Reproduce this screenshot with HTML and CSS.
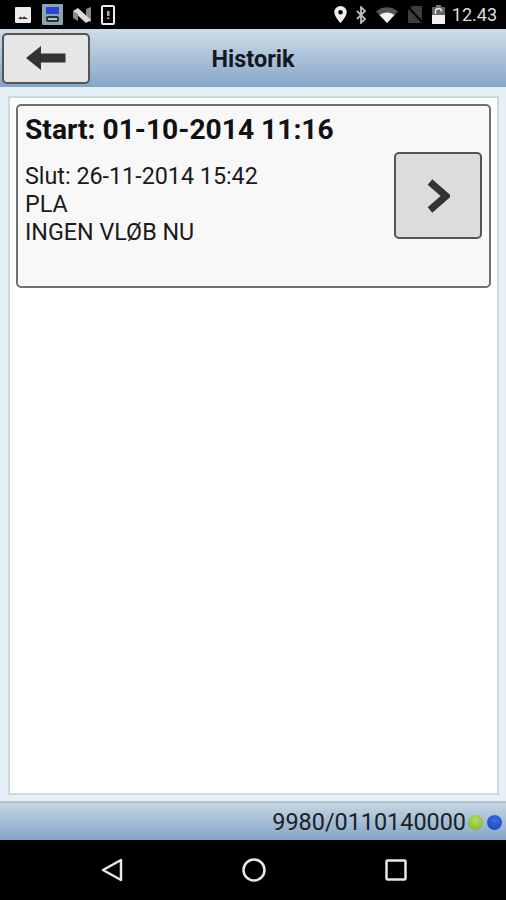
FILE: index.html
```html
<!DOCTYPE html>
<html lang="en">
<head>
    <meta charset="UTF-8">
    <meta name="viewport" content="width=device-width, initial-scale=1.0">
    <title>Historik</title>
    <link rel="stylesheet" href="styles.css">
</head>
<body>
    <div class="statusbar">
        <div class="status-left">
            <svg class="ico" width="16" height="16" viewBox="0 0 16 16"><rect width="16" height="16" rx="1" fill="#ececec"/><path d="M3 12l2.5-2.500 2 1.500 1.500-1.500 2 1 2 1.500z" fill="#333"/></svg>
            <svg class="ico" width="21" height="21" viewBox="0 0 21 21"><rect width="21" height="21" rx="1" fill="#8da3ad"/><rect x="4" y="3" width="13" height="7" fill="#2a46d8"/><rect x="4" y="12" width="13" height="6" rx="2" fill="#26343c"/><rect x="6" y="14" width="9" height="2" fill="#b8c6cc"/></svg>
            <svg class="ico" width="18" height="16" viewBox="0 0 18 16"><path d="M13 2l5-2v15l-5-2z" fill="#8a8a8a"/><path d="M0 4l5-3 13 12-5 3z" fill="#dcdcdc"/><path d="M0 4l5 3v7l-5-3z" fill="#8a8a8a"/></svg>
            <svg class="ico" width="14" height="20" viewBox="0 0 14 20"><rect x="1" y="1" width="12" height="18" rx="1" fill="#000" stroke="#eee" stroke-width="2"/><rect x="6" y="6" width="2.500" height="5" fill="#aaa"/><rect x="6" y="12.500" width="2.500" height="1.500" fill="#aaa"/></svg>
        </div>
        <div class="status-right">
            <svg width="13" height="17" viewBox="0 0 13 17"><path fill-rule="evenodd" d="M6.500 0A6.200 6.200 0 0 0 .3 6.200C.3 10.500 6.500 17 6.500 17s6.200-6.500 6.200-10.800A6.200 6.200 0 0 0 6.500 0zm0 8.500a2.300 2.300 0 1 1 0-4.600 2.300 2.300 0 0 1 0 4.600z" fill="#eee"/></svg>
            <svg width="11" height="18" viewBox="0 0 11 18"><path d="M1 5l8 8-4 4V1l4 4-8 8" fill="none" stroke="#bbb" stroke-width="1.800"/></svg>
            <svg width="22" height="16" viewBox="0 0 22 16"><path d="M0 4.500C6 -1.300 16 -1.300 22 4.500L11 16z" fill="#555"/><path d="M3.500 8C7.500 4.500 14.500 4.500 18.500 8L11 16z" fill="#f2f2f2"/></svg>
            <svg width="16" height="17" viewBox="0 0 16 17"><path d="M1 17V4l4-4h10v17z" fill="#3d3d3d"/><path d="M1 1l14 15" stroke="#000" stroke-width="2"/></svg>
            <svg width="13" height="19" viewBox="0 0 13 19"><rect x="4" y="0" width="5" height="3" fill="#777"/><rect y="2" width="13" height="17" rx="1" fill="#666"/><rect y="10" width="13" height="9" fill="#f2f2f2"/><path d="M3.500 9V6.500a3 3 0 0 1 6 0" fill="none" stroke="#eee" stroke-width="1.500"/></svg>
            <span class="clock">12.43</span>
        </div>
    </div>

    <div class="topbar">
        <button class="btn btn-back">
            <svg width="40" height="24" viewBox="0 0 40 24"><path d="M0 12L15 0v7.500h24.500v9H15V24z" fill="#333"/></svg>
        </button>
        <h1>Historik</h1>
    </div>

    <div class="content">
        <div class="panel">
            <div class="card">
                <h2>Start: 01-10-2014 11:16</h2>
                <div class="card-row">
                    <div class="card-text">
                        <p>Slut: 26-11-2014 15:42</p>
                        <p>PLA</p>
                        <p>INGEN VLØB NU</p>
                    </div>
                    <button class="btn btn-next">
                        <svg width="24" height="36" viewBox="0 0 24 36"><path d="M4 4l16 14L4 32" fill="none" stroke="#333" stroke-width="7" stroke-linejoin="miter"/></svg>
                    </button>
                </div>
            </div>
        </div>
    </div>

    <div class="bottombar">
        <span class="terminal">9980/0110140000</span>
        <span class="dot dot-green"></span>
        <span class="dot dot-blue"></span>
    </div>

    <div class="navbar">
        <svg width="22" height="24" viewBox="0 0 22 24"><path d="M2 12L20 2v20z" fill="none" stroke="#e8e8e8" stroke-width="2.500" stroke-linejoin="round"/></svg>
        <svg width="24" height="24" viewBox="0 0 24 24"><circle cx="12" cy="12" r="10.500" fill="none" stroke="#e8e8e8" stroke-width="2.500"/></svg>
        <svg width="22" height="22" viewBox="0 0 22 22"><rect x="1.500" y="1.500" width="19" height="19" rx="1" fill="none" stroke="#e8e8e8" stroke-width="2.500"/></svg>
    </div>
</body>
</html>
```

FILE: styles.css
```css
html, body { height: 100%; }
body { margin: 0; height: 900px; overflow: hidden; display: flex; flex-direction: column; font-family: Roboto, "Liberation Sans", sans-serif; color: #111; background: #000; }

.statusbar { height: 29px; flex: none; display: flex; justify-content: space-between; align-items: center; background: #000; }
.status-left { display: flex; align-items: center; padding-left: 15px; }
.status-left .ico { margin-right: 10px; }
.status-left .ico:first-child { margin-right: 11px; }
.status-right { display: flex; align-items: center; gap: 9px; padding-right: 9px; }
.clock { color: #ddd; font-size: 18px; margin-left: -2px; }

.topbar { height: 58px; flex: none; position: relative; display: flex; align-items: center; box-sizing: border-box; padding: 0 0 0 2px; background: linear-gradient(#d0dce8, #85a6c8); }
.topbar h1 { position: absolute; left: 0; right: 0; margin: 1px 0 0; text-align: center; font-size: 23.400px; font-weight: bold; color: #14181e; pointer-events: none; }

.btn { display: flex; align-items: center; justify-content: center; padding: 0; box-sizing: border-box; border: 2px solid #555; border-radius: 5px; background: #e6e6e6; }
.btn-back { width: 88px; height: 51px; }
.btn-next { width: 88px; height: 87px; flex: none; margin-right: 7px; background: #dcdcdc; }

.content { flex: 1; display: flex; box-sizing: border-box; padding: 9px 7px 6px 8px; background: #e4eff8; }
.panel { flex: 1; box-sizing: border-box; padding: 6px 6px; background: #fff; border: 2px solid #c8dcdc; }

.card { height: 184px; box-sizing: border-box; padding: 0 0 0 7px; background: #f8f8f8; border: 2px solid #707070; border-radius: 5px; }
.card h2 { margin: 0; padding-top: 6px; font-size: 28.200px; line-height: 36px; font-weight: bold; color: #111; white-space: nowrap; }
.card-row { display: flex; justify-content: space-between; align-items: flex-start; margin-top: 4px; }
.card-text { padding-top: 10px; }
.card-text p { margin: 0; font-size: 23.300px; line-height: 28px; color: #1a1a1a; }

.bottombar { height: 39px; flex: none; display: flex; align-items: center; justify-content: flex-end; box-sizing: border-box; padding-right: 4px; border-top: 2px solid #b6c4d0; background: linear-gradient(#c6d5e3, #84a5c6); }
.terminal { font-size: 23.400px; color: #1c2024; margin-right: 2px; }
.dot { width: 15px; height: 15px; border-radius: 50%; margin-top: 1px; }
.dot-green { background: radial-gradient(circle at 50% 35%, #b4e060, #78b028); margin-right: 4px; }
.dot-blue { background: radial-gradient(circle at 50% 35%, #3c6ee0, #1840b8); }

.navbar { height: 60px; flex: none; display: flex; justify-content: space-between; align-items: center; box-sizing: border-box; padding: 0 99px 0 101px; background: #000; }
```
